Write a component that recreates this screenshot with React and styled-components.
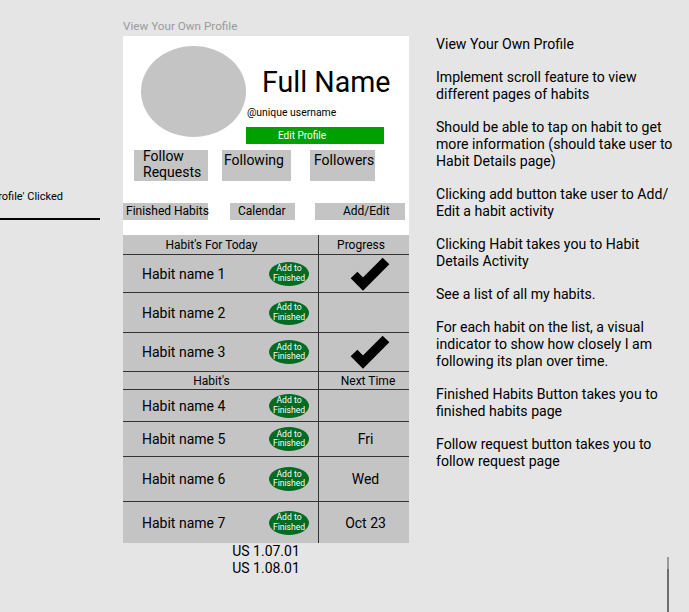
import React from "react";
import styled, { createGlobalStyle } from "styled-components";

const GlobalStyle = createGlobalStyle`
  html, body {
    margin: 0;
    padding: 0;
    background: #e5e5e5;
    overflow: hidden;
  }
  body {
    font-family: Roboto, "Liberation Sans", sans-serif;
    color: #000;
  }
`;

const Canvas = styled.div`
  position: relative;
  width: 689px;
  height: 612px;
  display: flex;
  align-items: flex-start;
  overflow: hidden;
`;

const LeftLink = styled.div`
  width: 123px;
  flex-shrink: 0;
  padding-top: 190px;
  display: flex;
  flex-direction: column;
`;

const LinkLabel = styled.div`
  width: 63px;
  display: flex;
  justify-content: flex-end;
  font-size: 11px;
  line-height: 14px;
  white-space: nowrap;
`;

const LinkLine = styled.div`
  margin-top: 14px;
  width: 100px;
  height: 2px;
  background: #000;
`;

const PhoneCol = styled.div`
  width: 286px;
  flex-shrink: 0;
  padding-top: 18px;
  display: flex;
  flex-direction: column;
`;

const FrameTitle = styled.div`
  font-size: 11.7px;
  line-height: 16px;
  color: #9a9a9a;
  margin-bottom: 2px;
  white-space: nowrap;
`;

const Frame = styled.div`
  background: #c4c4c4;
`;

const TopSection = styled.div`
  height: 199px;
  background: #fff;
  display: flex;
  flex-direction: column;
`;

const ProfileRow = styled.div`
  display: flex;
  padding: 10px 0 0 18px;
`;

const Avatar = styled.div`
  width: 105px;
  height: 91px;
  border-radius: 50%;
  background: #c4c4c4;
  flex-shrink: 0;
`;

const ProfileInfo = styled.div`
  display: flex;
  flex-direction: column;
  padding-top: 20px;
`;

const FullName = styled.div`
  margin-left: 16px;
  font-size: 28.6px;
  line-height: 33px;
  white-space: nowrap;
`;

const Username = styled.div`
  margin: 7px 0 0 1px;
  font-size: 10.4px;
  line-height: 13px;
  white-space: nowrap;
`;

const EditButton = styled.div`
  margin-top: 8px;
  width: 138px;
  height: 17px;
  box-sizing: border-box;
  padding-left: 32px;
  background: #00a000;
  color: #fff;
  font-size: 10px;
  line-height: 17px;
`;

const StatsRow = styled.div`
  display: flex;
  margin-top: 6px;
  height: 31px;
`;

const StatButton = styled.div`
  margin-left: ${(p) => p.$ml}px;
  width: ${(p) => p.$w}px;
  height: 31px;
  box-sizing: border-box;
  padding-left: ${(p) => p.$pl}px;
  background: #c4c4c4;
  font-size: 14px;
  line-height: 16px;
`;

const StatLabel = styled.div`
  margin-top: ${(p) => p.$mt}px;
`;

const NavRow = styled.div`
  display: flex;
  margin-top: 22px;
`;

const NavButton = styled.div`
  margin-left: ${(p) => p.$ml}px;
  width: ${(p) => p.$w}px;
  height: 17px;
  box-sizing: border-box;
  padding-left: ${(p) => p.$pl}px;
  background: #c4c4c4;
  font-size: 12px;
  line-height: 17px;
  white-space: nowrap;
`;

const Row = styled.div`
  display: grid;
  grid-template-columns: 196px 90px;
  height: ${(p) => p.$h}px;
  box-sizing: border-box;
  border-bottom: ${(p) => (p.$last ? "none" : "1px solid #333")};
`;

const HeadCell = styled.div`
  display: flex;
  align-items: center;
  justify-content: center;
  font-size: 12px;
  padding: ${(p) => p.$pad || "0"};
  border-right: ${(p) => (p.$divider ? "1px solid #333" : "none")};
`;

const HabitCell = styled.div`
  display: flex;
  align-items: center;
  padding: 0 9px 0 19px;
  border-right: 1px solid #333;
`;

const HabitName = styled.div`
  flex: 1;
  font-size: 14px;
`;

const FinishPill = styled.div`
  width: 40px;
  height: 24px;
  border-radius: 50%;
  background: #006b21;
  color: #fff;
  font-size: 8.6px;
  line-height: 9.5px;
  display: flex;
  align-items: center;
  justify-content: center;
  text-align: center;
  white-space: nowrap;
`;

const ProgressCell = styled.div`
  display: flex;
  align-items: center;
  padding-left: 31px;
`;

const NextCell = styled.div`
  display: flex;
  align-items: center;
  justify-content: center;
  padding-left: 3px;
  font-size: 14px;
`;

const Versions = styled.div`
  text-align: center;
  font-size: 14px;
  line-height: 17px;
`;

const Notes = styled.div`
  margin-left: 27px;
  padding-top: 36px;
  font-size: 14.1px;
  line-height: 16.67px;
  white-space: nowrap;
`;

const Note = styled.p`
  margin: 0 0 16.67px;
`;

const Connector = styled.div`
  position: absolute;
  left: 667px;
  top: 557px;
  width: 2px;
  height: 55px;
  background: linear-gradient(#9a9a9a 0 12px, #6e6e6e 12px);
`;

const Check = () => (
  <svg width="40" height="34" viewBox="0 0 40 34" style={{ overflow: "visible" }}>
    <polyline
      points="4,18 13,27 36,4"
      fill="none"
      stroke="#000"
      strokeWidth="9.5"
      strokeLinejoin="miter"
    />
  </svg>
);

const today = [
  { name: "Habit name 1", h: 38, done: true },
  { name: "Habit name 2", h: 40, done: false },
  { name: "Habit name 3", h: 39, done: true },
];

const allHabits = [
  { name: "Habit name 4", h: 32, next: "" },
  { name: "Habit name 5", h: 35, next: "Fri" },
  { name: "Habit name 6", h: 45, next: "Wed" },
  { name: "Habit name 7", h: 41, next: "Oct 23", last: true },
];

const Pill = () => (
  <FinishPill>
    Add to
    <br />
    Finished
  </FinishPill>
);

const App = () => {
  return (
    <>
      <GlobalStyle />
      <Canvas>
        <LeftLink>
          <LinkLabel>'View Your Own Profile' Clicked</LinkLabel>
          <LinkLine />
        </LeftLink>

        <PhoneCol>
          <FrameTitle>View Your Own Profile</FrameTitle>
          <Frame>
            <TopSection>
              <ProfileRow>
                <Avatar />
                <ProfileInfo>
                  <FullName>Full Name</FullName>
                  <Username>@unique username</Username>
                  <EditButton>Edit Profile</EditButton>
                </ProfileInfo>
              </ProfileRow>
              <StatsRow>
                <StatButton $ml={11} $w={74} $pl={9}>
                  <StatLabel $mt={-2}>
                    Follow
                    <br />
                    Requests
                  </StatLabel>
                </StatButton>
                <StatButton $ml={14} $w={69} $pl={2}>
                  <StatLabel $mt={2}>Following</StatLabel>
                </StatButton>
                <StatButton $ml={19} $w={65} $pl={4}>
                  <StatLabel $mt={2}>Followers</StatLabel>
                </StatButton>
              </StatsRow>
              <NavRow>
                <NavButton $ml={0} $w={85} $pl={3}>
                  Finished Habits
                </NavButton>
                <NavButton $ml={22} $w={65} $pl={8}>
                  Calendar
                </NavButton>
                <NavButton $ml={20} $w={90} $pl={28}>
                  Add/Edit
                </NavButton>
              </NavRow>
            </TopSection>

            <Row $h={20}>
              <HeadCell $divider $pad="0 18px 0 0">
                Habit's For Today
              </HeadCell>
              <HeadCell $pad="0 6px 0 0">Progress</HeadCell>
            </Row>
            {today.map((habit) => (
              <Row key={habit.name} $h={habit.h}>
                <HabitCell>
                  <HabitName>{habit.name}</HabitName>
                  <Pill />
                </HabitCell>
                <ProgressCell>{habit.done && <Check />}</ProgressCell>
              </Row>
            ))}
            <Row $h={18}>
              <HeadCell $divider $pad="0 18px 0 0">
                Habit's
              </HeadCell>
              <HeadCell $pad="0 0 0 8px">Next Time</HeadCell>
            </Row>
            {allHabits.map((habit) => (
              <Row key={habit.name} $h={habit.h} $last={habit.last}>
                <HabitCell>
                  <HabitName>{habit.name}</HabitName>
                  <Pill />
                </HabitCell>
                <NextCell>{habit.next}</NextCell>
              </Row>
            ))}
          </Frame>
          <Versions>
            US 1.07.01
            <br />
            US 1.08.01
          </Versions>
        </PhoneCol>

        <Notes>
          <Note>View Your Own Profile</Note>
          <Note>
            Implement scroll feature to view
            <br />
            different pages of habits
          </Note>
          <Note>
            Should be able to tap on habit to get
            <br />
            more information (should take user to
            <br />
            Habit Details page)
          </Note>
          <Note>
            Clicking add button take user to Add/
            <br />
            Edit a habit activity
          </Note>
          <Note>
            Clicking Habit takes you to Habit
            <br />
            Details Activity
          </Note>
          <Note>See a list of all my habits.</Note>
          <Note>
            For each habit on the list, a visual
            <br />
            indicator to show how closely I am
            <br />
            following its plan over time.
          </Note>
          <Note>
            Finished Habits Button takes you to
            <br />
            finished habits page
          </Note>
          <Note>
            Follow request button takes you to
            <br />
            follow request page
          </Note>
        </Notes>

        <Connector />
      </Canvas>
    </>
  );
};

export default App;
